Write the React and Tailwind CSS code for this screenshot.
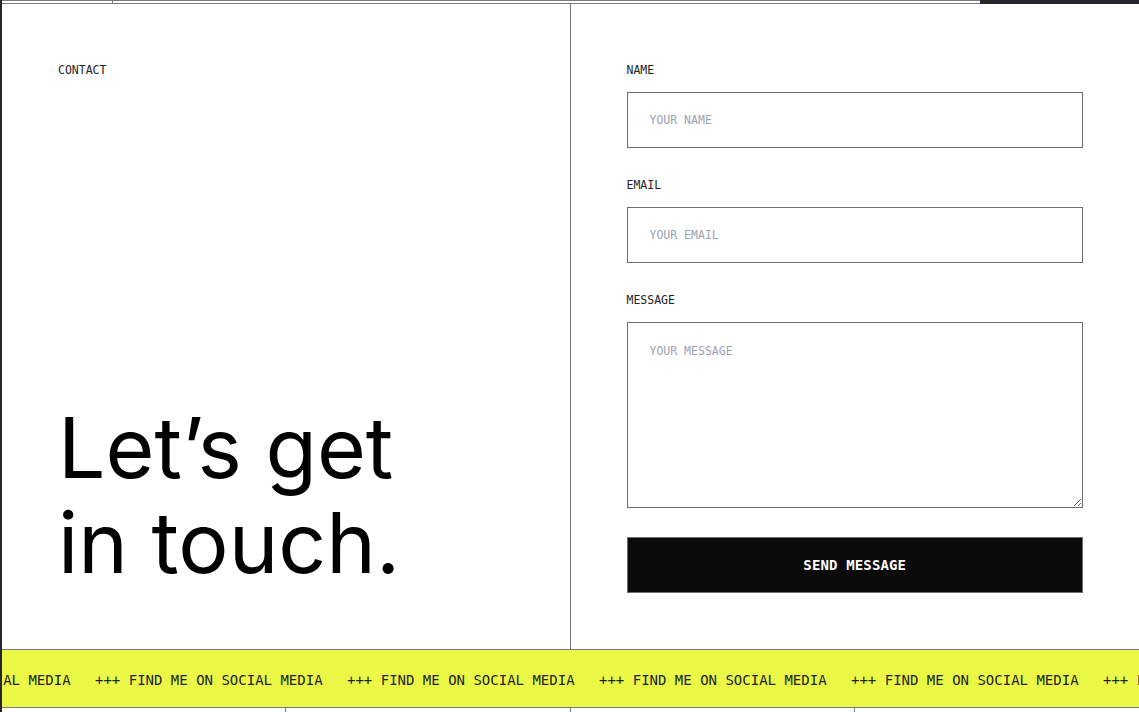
const mono = { fontFamily: '"DejaVu Sans Mono", "Liberation Mono", monospace' };

const Field = ({ label, placeholder, textarea }) => (
  <label className="flex flex-col">
    <span className="text-[11.5px] leading-4 text-[#222] uppercase">{label}</span>
    {textarea ? (
      <textarea
        placeholder={placeholder}
        className="mt-3.5 h-[186px] w-full border border-[#6e6e6e] bg-white px-[22px] py-5 text-[11.5px] leading-4 text-[#222] outline-none placeholder:text-[#9ca3af]"
      />
    ) : (
      <input
        placeholder={placeholder}
        className="mt-3.5 h-14 w-full border border-[#6e6e6e] bg-white px-[22px] text-[11.5px] text-[#222] outline-none placeholder:text-[#9ca3af]"
      />
    )}
  </label>
);

const Marquee = () => {
  const items = Array.from({ length: 7 });
  return (
    <div className="h-[59px] overflow-hidden border-y border-[#7a7a7a] bg-[#ebf946]">
      <div className="flex h-full -translate-x-[159px] items-center whitespace-nowrap pt-[3px] text-[14px] text-[#222]">
        {items.map((_, i) => (
          <span key={i} className="w-[252px] shrink-0">+++ FIND ME ON SOCIAL MEDIA</span>
        ))}
      </div>
    </div>
  );
};

export default function App() {
  return (
    <div className="min-h-screen border-l-2 border-[#26272b] bg-white" style={mono}>
      {/* tail of the previous section */}
      <div className="flex h-[4px] border-y border-[#7a7a7a]">
        <div className="w-[111px] border-r border-[#7a7a7a]" />
        <div className="flex-1" />
        <div className="-my-px w-[159px] bg-[#26272b]" />
      </div>

      <section className="grid h-[645px] grid-cols-2">
        <div className="flex flex-col justify-between border-r border-[#7a7a7a] px-14 pt-[58px] pb-[59px]">
          <span className="text-[11.5px] leading-4 text-[#222]">CONTACT</span>
          <h2
            className="text-[84px] leading-[95px] font-normal tracking-normal text-black"
            style={{ fontFamily: 'Inter, "Noto Sans", sans-serif' }}
          >
            Let’s get
            <br />
            in touch.
          </h2>
        </div>

        <form className="flex flex-col gap-[29px] px-14 pt-[58px]" onSubmit={(e) => e.preventDefault()}>
          <Field label="Name" placeholder="YOUR NAME" />
          <Field label="Email" placeholder="YOUR EMAIL" />
          <Field label="Message" placeholder="YOUR MESSAGE" textarea />
          <button
            type="submit"
            className="h-14 w-full border border-[#6e6e6e] bg-[#0a0a0a] text-[14px] font-semibold tracking-[0.01em] text-white"
          >
            SEND MESSAGE
          </button>
        </form>
      </section>

      <Marquee />

      <div className="grid h-[40px] grid-cols-4">
        <div className="border-r border-[#7a7a7a]" />
        <div className="border-r border-[#7a7a7a]" />
        <div className="border-r border-[#7a7a7a]" />
        <div />
      </div>
    </div>
  );
}
